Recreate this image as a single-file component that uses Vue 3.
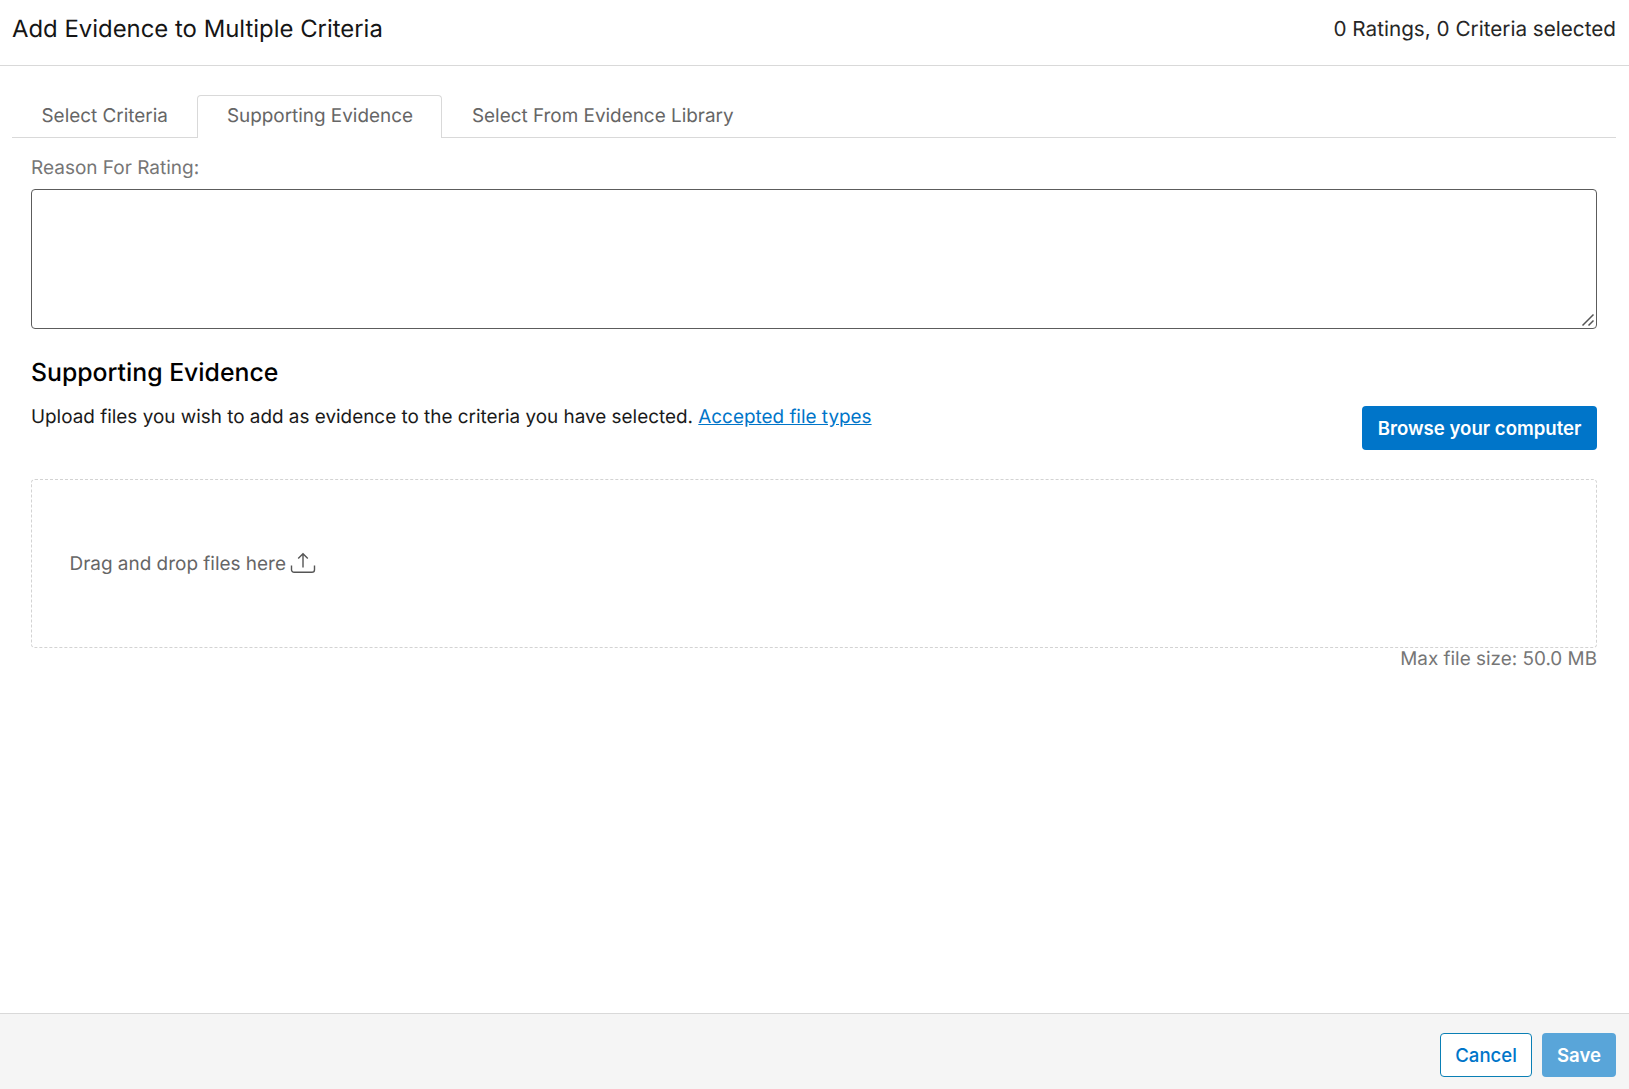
<script setup>
const tabs = [
  { label: 'Select Criteria', active: false },
  { label: 'Supporting Evidence', active: true },
  { label: 'Select From Evidence Library', active: false }
]
</script>

<template>
  <div class="modal">
    <header class="head">
      <h1 class="title">Add Evidence to Multiple Criteria</h1>
      <span class="count">0 Ratings, 0 Criteria selected</span>
    </header>
    <main class="body">
      <nav class="tabs">
        <a v-for="t in tabs" :key="t.label" class="tab" :class="{ active: t.active }">{{ t.label }}</a>
      </nav>
      <section class="pane">
        <label class="label" for="reason">Reason For Rating:</label>
        <div class="area-wrap">
          <textarea id="reason" class="area"></textarea>
          <svg class="grip" width="14" height="14" viewBox="0 0 14 14" fill="none" stroke="#555" stroke-width="1.5">
            <path d="M1.5 12.5 12.5 1.5M7.5 12.5l5-5" />
          </svg>
        </div>
        <h2 class="sub">Supporting Evidence</h2>
        <div class="upload">
          <p class="desc">Upload files you wish to add as evidence to the criteria you have selected. <a class="link" href="#">Accepted file types</a></p>
          <button class="btn primary" type="button">Browse your computer</button>
        </div>
        <div class="drop">
          <span>Drag and drop files here</span>
          <svg class="ico" width="26" height="22" viewBox="0 0 26 22" fill="none" stroke="currentColor" stroke-width="1.4">
            <path d="M13 15.5V2M8.2 6.6 13 1.8l4.8 4.8" />
            <path d="M1.5 13.5v4.2a2.6 2.6 0 0 0 2.6 2.6h17.8a2.6 2.6 0 0 0 2.6-2.6v-4.2" />
          </svg>
        </div>
        <div class="max">Max file size: 50.0 MB</div>
      </section>
    </main>
    <footer class="foot">
      <button class="btn ghost" type="button">Cancel</button>
      <button class="btn save" type="button">Save</button>
    </footer>
  </div>
</template>

<style>
html, body { margin: 0; background: #fff; }
</style>

<style scoped>
.modal {
  height: 1089px;
  overflow: hidden;
  display: flex;
  flex-direction: column;
  font-family: Inter, "Liberation Sans", sans-serif;
  text-rendering: geometricPrecision;
  color: #1a1a1a;
  background: #fff;
  box-sizing: border-box;
}
.head {
  height: 66px;
  box-sizing: border-box;
  border-bottom: 1px solid #d9d9d9;
  padding: 0 13px 8px 12px;
  display: flex;
  align-items: center;
  justify-content: space-between;
}
.title { margin: 0; font-size: 23.9px; font-weight: 400; line-height: 1.3; color: #151515; }
.count { font-size: 20.7px; color: #262626; }
.body { flex: 1; padding: 29px 13px 0 12px; }
.tabs {
  display: flex;
  border-bottom: 1px solid #d9d9d9;
  height: 42px;
}
.tab {
  box-sizing: border-box;
  height: 43px;
  padding: 0 28.5px 4px;
  display: flex;
  align-items: center;
  font-size: 18.9px;
  color: #666;
  border: 1px solid transparent;
  border-bottom: 0;
}
.tab.active {
  background: #fff;
  border-color: #d9d9d9;
  border-radius: 4px 4px 0 0;
}
.pane { padding: 18px 19px 0; }
.label { display: block; font-size: 19px; line-height: 24px; color: #767676; }
.area-wrap { position: relative; margin-top: 9px; }
.area {
  display: block;
  box-sizing: border-box;
  width: 100%;
  height: 140px;
  border: 1px solid #5c5c5c;
  border-radius: 4px;
  background: #fff;
  resize: vertical;
  outline: none;
  font: inherit;
}
.grip {
  position: absolute;
  right: 2px;
  bottom: 2px;
  background: #fff;
  pointer-events: none;
}
.sub { margin: 27px 0 0; font-size: 24.8px; font-weight: 450; line-height: 32px; color: #000; }
.upload { display: flex; justify-content: space-between; align-items: flex-start; margin-top: 14px; }
.desc { margin: 2px 0 0; font-size: 18.9px; line-height: 26px; color: #1a1a1a; }
.link { color: #0075c9; text-decoration: underline; }
.btn {
  box-sizing: border-box;
  height: 44px;
  font-family: inherit;
  font-size: 18.6px;
  font-weight: 600;
  border-radius: 4px;
  padding: 0 14px;
  border: 1px solid transparent;
}
.primary { background: #0075c9; color: #fff; margin-top: 4px; padding: 0 14.5px; }
.drop {
  margin-top: 29px;
  height: 169px;
  box-sizing: border-box;
  border: 1px dashed #d3d3d3;
  border-radius: 4px;
  padding-left: 37.5px;
  display: flex;
  align-items: center;
  gap: 4px;
  font-size: 18.95px;
  color: #666;
}
.ico { color: #555; margin-top: -1px; }
.max { text-align: right; font-size: 18.9px; line-height: 22px; color: #767676; }
.foot {
  height: 76px;
  box-sizing: border-box;
  border-top: 1px solid #d9d9d9;
  background: #f5f5f5;
  padding: 19px 13px 0;
  display: flex;
  justify-content: flex-end;
  align-items: flex-start;
  gap: 10px;
}
.ghost { background: #fff; color: #0075c9; border-color: #0a7fb5; font-weight: 500; }
.save { background: #59a5d9; color: #fff; }
</style>
